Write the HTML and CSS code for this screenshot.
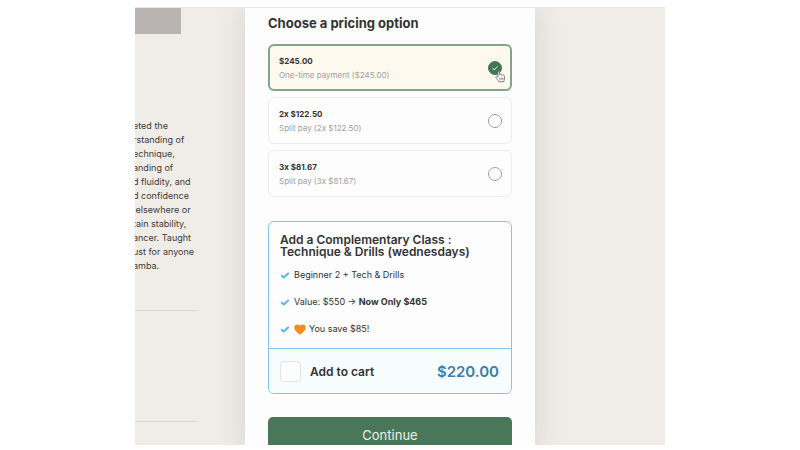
FILE: index.html
```html
<!DOCTYPE html>
<html lang="en">
<head>
<meta charset="utf-8">
<title>Choose a pricing option</title>
<link rel="stylesheet" href="styles.css">
</head>
<body>
<div class="frame">
  <aside class="about">
    <div class="photo"></div>
    <div class="story">
      <span>eted the</span>
      <span>rstanding of</span>
      <span>echnique,</span>
      <span>anding of</span>
      <span>d fluidity, and</span>
      <span>d confidence</span>
      <span>&nbsp;elsewhere or</span>
      <span>tain stability,</span>
      <span>ancer. Taught</span>
      <span>ust for anyone</span>
      <span>amba.</span>
    </div>
    <hr class="rule">
    <hr class="rule rule-last">
  </aside>
  <form class="checkout">
    <h1 class="title">Choose a pricing option</h1>
    <div class="options">
      <label class="option selected">
        <span class="option-text"><b class="amount">$245.00</b><span class="terms">One-time payment ($245.00)</span></span>
        <input class="radio" type="radio" name="plan" checked>
        <svg class="tick" viewBox="0 0 14 14" aria-hidden="true"><path d="M4.5 7.2 6.2 8.8 9.6 5.4"/></svg>
        <svg class="pointer" viewBox="0 0 12 14" aria-hidden="true"><path d="M3.2 7.8V2c0-1.4 1.8-1.4 1.8 0v3.3c.2-.8 1.6-.8 1.8.2.3-.7 1.6-.6 1.8.4.5-.6 1.7-.3 1.7.8v3.1c0 1-.7 1.5-.8 2.9H4.1C4 11.3 1.3 9.3.9 8c-.3-1 .8-1.5 1.5-.8zM5.2 8.3v2.2M6.9 8.3v2.2M8.5 8.3v2.2"/></svg>
      </label>
      <label class="option">
        <span class="option-text"><b class="amount">2x $122.50</b><span class="terms">Split pay (2x $122.50)</span></span>
        <input class="radio" type="radio" name="plan">
      </label>
      <label class="option">
        <span class="option-text"><b class="amount">3x $81.67</b><span class="terms">Split pay (3x $81.67)</span></span>
        <input class="radio" type="radio" name="plan">
      </label>
    </div>
    <section class="bump">
      <div class="offer">
        <h2 class="offer-title">Add a Complementary Class :<br>Technique &amp; Drills (wednesdays)</h2>
        <ul class="perks">
          <li><svg class="check" viewBox="0 0 10 8" aria-hidden="true"><path d="M1.2 4.2 3.8 6.5 8.7 1.9"/></svg><span>Beginner 2 + Tech &amp; Drills</span></li>
          <li><svg class="check" viewBox="0 0 10 8" aria-hidden="true"><path d="M1.2 4.2 3.8 6.5 8.7 1.9"/></svg><span>Value: $550 → <b>Now Only $465</b></span></li>
          <li><svg class="check" viewBox="0 0 10 8" aria-hidden="true"><path d="M1.2 4.2 3.8 6.5 8.7 1.9"/></svg><svg class="heart" viewBox="0 0 12 11" aria-hidden="true"><path d="M6 10.7C3.6 9 .3 6.6.3 3.5.3.3 4.5-.6 6 2 7.5-.6 11.7.3 11.7 3.5 11.7 6.6 8.400 9 6 10.700z"/></svg><span>You save $85!</span></li>
        </ul>
      </div>
      <div class="cart">
        <input class="box" type="checkbox" id="add">
        <label class="cart-label" for="add">Add to cart</label>
        <strong class="price">$220.00</strong>
      </div>
    </section>
    <button class="continue" type="button">Continue</button>
  </form>
</div>
</body>
</html>
```

FILE: styles.css
```css
* { box-sizing: border-box; }

body {
  margin: 0;
  background: #fff;
  color: #333;
  font-family: Inter, "Open Sans", sans-serif;
}

.frame {
  display: grid;
  grid-template-columns: 110fr 290fr 130fr;
  width: 66.25%;
  height: calc(100vh - 12px);
  margin: 7px auto 5px;
  overflow: hidden;
  background: #f0ede9;
  border-top: 1px solid #e9e8e7;
}

.about {
  overflow: hidden;
  font-size: 9px;
  line-height: 14px;
  color: #3c3a39;
}

.photo {
  width: 46px;
  height: 26px;
  background: #b9b3b2;
}

.story {
  margin: 85px 0 0 -2px;
}

.story span {
  display: block;
  white-space: nowrap;
}

.rule {
  width: 62px;
  margin: 37px 0 0;
  border: 0;
  border-top: 1px solid #d9d6d2;
}

.rule-last { margin-top: 110px; }

.checkout {
  padding: 6px 23px 0;
  background: #fdfdfd;
  box-shadow: 0 0 28px rgba(60, 60, 60, 0.14);
}

.title {
  margin: 0;
  font-size: 13px;
  line-height: 18px;
  font-weight: 700;
  white-space: nowrap;
}

.options {
  display: grid;
  gap: 6px;
  margin-top: 12px;
}

.option {
  position: relative;
  display: flex;
  align-items: center;
  justify-content: space-between;
  height: 47px;
  padding: 0 9px 0 10px;
  border: 1px solid #e6eeee;
  border-radius: 6px;
}

.selected {
  padding: 0 8px 0 9px;
  border: 2px solid #80a48c;
  background: #fdf9ee;
}

.option-text {
  display: grid;
  line-height: 14px;
}

.amount { font-size: 8px; }

.terms {
  font-size: 8px;
  color: #a0a09e;
}

.radio {
  appearance: none;
  width: 14px;
  height: 14px;
  margin: 0;
  border: 1px solid #8fa79a;
  border-radius: 50%;
}

.radio:checked {
  border-color: #437754;
  background: #437754;
}

.tick {
  position: absolute;
  right: 8px;
  top: 15px;
  width: 14px;
  height: 14px;
  fill: none;
  stroke: #fff;
  stroke-width: 1;
}

.pointer {
  position: absolute;
  right: 4px;
  top: 24px;
  width: 11px;
  height: 13px;
  fill: #fff;
  stroke: #555;
  stroke-width: 0.8;
}

.bump {
  margin-top: 24px;
  overflow: hidden;
  border: 1px solid #7cc8ea;
  border-radius: 6px;
}

.offer { padding: 12px 11px 12px; }

.offer-title {
  margin: 0;
  font-size: 12px;
  line-height: 12px;
  font-weight: 600;
  white-space: nowrap;
}

.perks {
  display: grid;
  gap: 13px;
  margin: 10px 0 0;
  padding: 0;
  list-style: none;
  font-size: 9px;
  line-height: 14px;
}

.perks li {
  display: flex;
  align-items: center;
}

.check {
  width: 10px;
  height: 8px;
  margin-right: 4px;
  fill: none;
  stroke: #54b8e8;
  stroke-width: 2;
}

.heart {
  width: 12px;
  height: 11px;
  margin-right: 3px;
  fill: #f28c1e;
}

.cart {
  display: flex;
  align-items: center;
  gap: 9px;
  height: 45px;
  padding: 0 12px 0 11px;
  border-top: 1px solid #7cc8ea;
  background: #f7fcfd;
}

.box {
  appearance: none;
  width: 21px;
  height: 21px;
  margin: 0;
  border: 1px solid #e2e2e2;
  border-radius: 4px;
  background: #fdfdfd;
}

.cart-label {
  font-size: 12px;
  font-weight: 600;
}

.price {
  margin-left: auto;
  font-size: 15px;
  font-weight: 600;
  color: #397fab;
}

.continue {
  display: block;
  width: 100%;
  height: 36px;
  margin-top: 23px;
  border: 0;
  border-radius: 5px;
  background: #4a7759;
  color: #e8efe9;
  font-family: inherit;
  font-size: 13px;
}
```
